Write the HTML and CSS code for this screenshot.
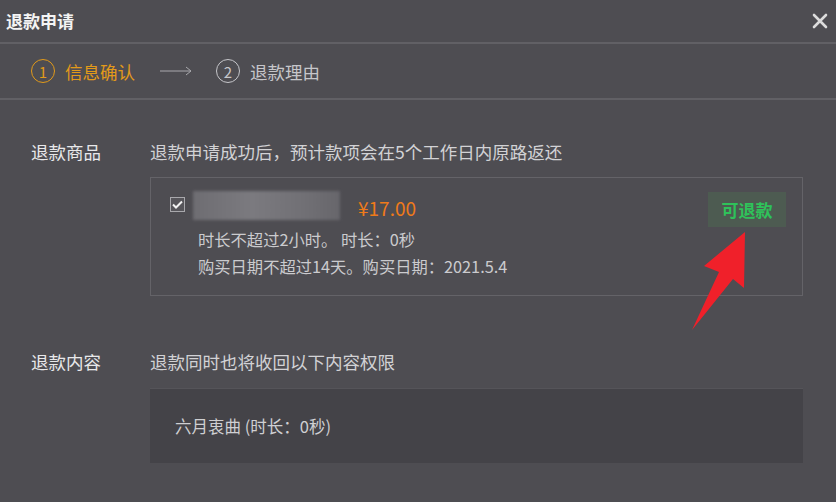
FILE: index.html
```html
<!DOCTYPE html>
<html lang="zh">
<head>
<meta charset="utf-8">
<title>退款申请</title>
<link rel="stylesheet" href="styles.css">
</head>
<body>
<div class="dialog">
  <div class="header">
    <span class="title">退款申请</span>
    <svg class="close" width="16" height="16" viewBox="0 0 16 16"><path d="M2 2L14 14M14 2L2 14" stroke="#dcdcdc" stroke-width="2.6" stroke-linecap="round"/></svg>
  </div>
  <div class="steps">
    <div class="step active"><span class="num">1</span><span class="step-text">信息确认</span></div>
    <svg class="step-arrow" width="32" height="10" viewBox="0 0 32 10"><path d="M0 5H31M26 1L31 5L26 9" fill="none" stroke="#a9a9ad" stroke-width="1"/></svg>
    <div class="step"><span class="num">2</span><span class="step-text">退款理由</span></div>
  </div>
  <div class="content">
    <div class="row first">
      <div class="label">退款商品</div>
      <div class="main">
        <div class="desc">退款申请成功后，预计款项会在5个工作日内原路返还</div>
        <div class="goods">
          <div class="goods-info">
            <div class="goods-top">
              <span class="check"><svg width="11" height="9" viewBox="0 0 11 9"><path d="M1 4.5L4 7.5L10 1.5" fill="none" stroke="#f2f2f2" stroke-width="2"/></svg></span>
              <span class="blur-name"></span>
              <span class="price">¥17.00</span>
            </div>
            <div class="detail">时长不超过2小时。 时长：0秒</div>
            <div class="detail">购买日期不超过14天。购买日期：2021.5.4</div>
          </div>
          <div class="tag">可退款</div>
        </div>
      </div>
    </div>
    <div class="row second">
      <div class="label">退款内容</div>
      <div class="main">
        <div class="desc">退款同时也将收回以下内容权限</div>
        <div class="rights">六月衷曲 (时长：0秒)</div>
      </div>
    </div>
  </div>
  <svg class="red-arrow" width="836" height="502" viewBox="0 0 836 502"><polygon points="745,232 704,266 719,272 692,330 733,279 744,288" fill="#f0202a"/></svg>
</div>
</body>
</html>
```

FILE: styles.css
```css
* { box-sizing: border-box; }
html, body { margin: 0; padding: 0; }
body {
  background: #4e4d52;
  font-family: "Noto Sans CJK SC", "Noto Sans", sans-serif;
  width: 836px;
  height: 502px;
  overflow: hidden;
}
.dialog { position: relative; width: 836px; height: 502px; }
.header {
  height: 44px;
  display: flex;
  align-items: center;
  justify-content: space-between;
  padding: 0 8px 2px 6px;
  border-bottom: 2px solid #616065;
}
.title { color: #f4f4f4; font-size: 17px; font-weight: bold; }
.close { margin-top: 1px; }
.steps {
  height: 56px;
  display: flex;
  align-items: center;
  padding-left: 31px;
  border-bottom: 2px solid #616065;
}
.step { display: flex; align-items: center; color: #c6c6ca; font-size: 17.5px; }
.num {
  width: 24px; height: 24px;
  border: 1.5px solid #c6c6ca;
  border-radius: 50%;
  display: flex; align-items: center; justify-content: center;
  font-size: 15px;
  margin-right: 10px;
}
.step.active { color: #e29a1a; }
.step.active .num { border-color: #e29a1a; }
.step-arrow { margin: 0 24px 0 25px; }
.content { padding-top: 40px; }
.row { display: flex; }
.row.second { margin-top: 54px; }
.label { width: 150px; padding-left: 31px; color: #e8e8ea; font-size: 17.5px; line-height: 24px; }
.main { width: 653px; }
.desc { color: #d2d2d5; font-size: 17.5px; line-height: 24px; }
.goods {
  margin-top: 13px;
  height: 119px;
  border: 1px solid #646368;
  display: flex;
  justify-content: space-between;
  padding: 13px 16px 0 19px;
}
.goods-top { display: flex; align-items: center; height: 29px; }
.check {
  width: 15px; height: 15px;
  border: 1px solid #a8a8ac;
  background: #56555a;
  display: flex; align-items: center; justify-content: center;
  margin-right: 8px;
  margin-top: -2px;
}
.blur-name {
  width: 147px; height: 29px;
  background: linear-gradient(90deg, #6e6d72, #7b7a7f 40%, #717075 75%, #67666b);
  filter: blur(1.5px);
  margin-right: 18px;
}
.price { color: #ef7a1a; font-size: 19px; margin-top: 3px; }
.detail { color: #cbcbce; font-size: 16.3px; line-height: 27px; padding-left: 28px; }
.goods-top + .detail { margin-top: 6px; }
.tag {
  width: 78px; height: 35px;
  margin-top: 1px;
  background: #4d5b51;
  color: #2fc25a;
  font-size: 17px;
  font-weight: bold;
  display: flex; align-items: center; justify-content: center;
}
.rights {
  margin-top: 14px;
  height: 75px;
  background: #444348;
  border-top: 1px solid #555459;
  color: #cfcfd2;
  font-size: 16.5px;
  display: flex; align-items: center;
  padding-left: 25px;
}
.red-arrow { position: absolute; left: 0; top: 0; pointer-events: none; }
```
